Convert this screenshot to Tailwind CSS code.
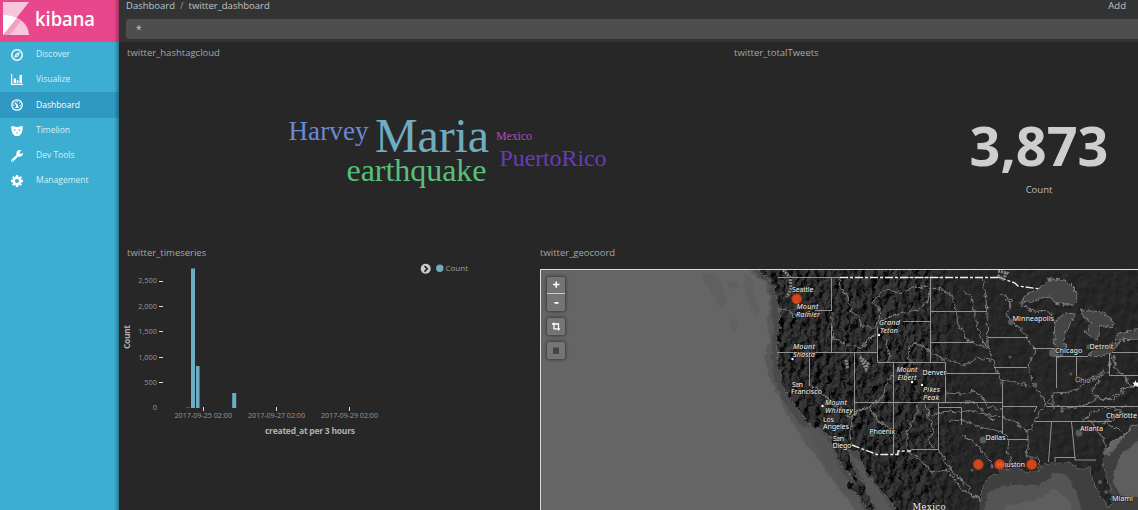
<!DOCTYPE html>
<html lang="en">
<head>
<meta charset="utf-8">
<title>Kibana</title>
<script src="https://cdn.jsdelivr.net/npm/@tailwindcss/browser@4"></script>
</head>
<body class="bg-[#272727] font-['Open_Sans',sans-serif] text-[#a6a6a6]">
<div class="flex h-[510px] w-[1138px] overflow-hidden">
  <aside class="relative w-[119px] shrink-0 bg-[#3caed2]">
    <div class="flex h-[42px] bg-[#e8488b]">
      <svg width="119" height="42" viewBox="0 0 119 42">
        <path d="M3 2H29L3 35Z" fill="#f8c6dc"/>
        <path d="M3 15C17 15 28 22 29 35H3Z" fill="#f8c6dc"/>
        <path d="M3 15C9 15 14 16.500 17 18L3 35Z" fill="#fff"/>
        <path d="M17 18L21 21L10 35H3Z" fill="#f3a0c5"/>
        <text x="35" y="26" fill="#fff" font-family="Open Sans" font-weight="600" font-size="19" textLength="60" lengthAdjust="spacingAndGlyphs">kibana</text>
      </svg>
    </div>
    <nav class="flex flex-col text-[8.5px] text-[#d8eff6]">
      <a class="flex h-[25px] items-center gap-[13px] pl-[11px]"><svg width="12" height="12" viewBox="0 0 12 12"><circle cx="6" cy="6" r="5.200" fill="none" stroke="#fff" stroke-width="1.400"/><path d="M9 3L7.200 7.200L3 9L4.800 4.800Z" fill="#fff"/><circle cx="6" cy="6" r=".8" fill="#3caed2"/></svg><span>Discover</span></a>
      <a class="flex h-[25px] items-center gap-[13px] pl-[11px]"><svg width="12" height="12" viewBox="0 0 12 12"><path d="M0 0H1.200V9.800H12V11H0ZM2.700 4.500H5V9H2.700ZM5.800 6H7.400V9H5.800ZM8.500 1H11V9H8.500Z" fill="#fff"/></svg><span>Visualize</span></a>
      <a class="flex h-[26px] items-center gap-[13px] bg-[#2f99c1] pl-[11px] text-white"><svg width="12" height="12" viewBox="0 0 12 12"><circle cx="6" cy="6" r="5.200" fill="none" stroke="#fff" stroke-width="1.300"/><path d="M3.600 3.500L6.800 6.800" stroke="#fff" stroke-width="1.400"/><path d="M4 9L6 5.800L8 9ZM2.300 5.500H3.500V6.700H2.300ZM5.500 2H6.700V3.200H5.500ZM8 3.500H9V4.600H8ZM8.600 6H9.800V7.200H8.600Z" fill="#fff"/></svg><span>Dashboard</span></a>
      <a class="flex h-[25px] items-center gap-[13px] pl-[11px]"><svg width="12" height="12" viewBox="0 0 12 12"><path d="M0 1.500L3 1L4 2H8L9 1L12 1.500L11.500 5L10.500 8.500L8 11H4L1.500 8.500L.5 5Z" fill="#fff"/><path d="M3 4.500H4.500V5.700H3ZM7.500 4.500H9V5.700H7.500ZM5 7.500H7L6 9Z" fill="#3caed2"/></svg><span>Timelion</span></a>
      <a class="flex h-[25px] items-center gap-[13px] pl-[11px]"><svg width="12" height="12" viewBox="0 0 12 12"><path d="M8.500 0C9.500 0 10.300 .2 10.800 .6L8.700 1.800V3.200L10 4L12 2.800C12.100 5 10.500 6.700 8.500 6.700C7.900 6.700 7.500 6.600 7.100 6.400L2.500 11.200C1.200 12.600-.7 11 .5 9.500L5.500 4.900C5 2.200 6.300 0 8.500 0Z" fill="#fff"/><circle cx="1.700" cy="10.300" r=".6" fill="#3caed2"/></svg><span>Dev Tools</span></a>
      <a class="flex h-[25px] items-center gap-[13px] pl-[11px]"><svg width="12" height="12" viewBox="0 0 12 12"><circle cx="6" cy="6" r="3.300" fill="none" stroke="#fff" stroke-width="2.600"/><path d="M6 0V2M6 10V12M0 6H2M10 6H12M1.800 1.800L3 3M9 9L10.200 10.200M10.200 1.800L9 3M3 9L1.800 10.200" stroke="#fff" stroke-width="2.400"/></svg><span>Management</span></a>
    </nav>
    <div class="absolute inset-y-0 right-0 w-[5px] bg-gradient-to-r from-black/0 to-black/30"></div>
  </aside>

  <main class="flex min-w-0 flex-1 flex-col">
    <header class="h-[42px] bg-[#333333] pl-[7px]">
      <div class="flex h-[19px] justify-between pr-[12px] text-[9.5px] leading-[12px] text-[#c4c4c4]">
        <div class="flex gap-[5px]"><span class="text-[#a5cdd9]">Dashboard</span><span class="text-[#999]">/</span><span>twitter_dashboard</span></div>
        <span>Add</span>
      </div>
      <div class="h-[20px] rounded-l-[3px] bg-[#4e4e4e] pl-[10px] text-[10px] leading-[21px] text-[#ccc]">*</div>
    </header>

    <div class="flex h-[200px]">
      <section class="w-[620px] pl-[8px] pt-[4px]">
        <h2 class="h-[14px] text-[9.5px] leading-[14px]">twitter_hashtagcloud</h2>
        <svg width="600" height="150" viewBox="127 60 600 150" font-family="Liberation Serif">
          <text x="288.500" y="140" font-size="27" fill="#6d87d6" textLength="80">Harvey</text>
          <text x="375" y="152" font-size="48" fill="#6eadc1" textLength="114">Maria</text>
          <text x="346.500" y="181" font-size="32" fill="#57c17b" textLength="140">earthquake</text>
          <text x="496" y="140" font-size="12" fill="#b04bb4" textLength="36">Mexico</text>
          <text x="499.500" y="166" font-size="24" fill="#663db8" textLength="107">PuertoRico</text>
        </svg>
      </section>
      <section class="flex flex-1 flex-col pl-[7px] pt-[4px]">
        <h2 class="h-[14px] text-[9.5px] leading-[14px]">twitter_totalTweets</h2>
        <div class="ml-[205px] mt-[56px] flex w-[200px] flex-col items-center">
          <div class="text-[54px] font-bold leading-[58px] text-[#cecece]">3,873</div>
          <div class="mt-[9px] text-[9.5px] leading-[14px] text-[#bdbdbd]">Count</div>
        </div>
      </section>
    </div>

    <div class="flex h-[268px]">
      <section class="w-[414px] pl-[3px] pt-[4px]">
        <h2 class="h-[14px] pl-[5px] text-[9.5px] leading-[14px]">twitter_timeseries</h2>
        <svg width="400" height="190" viewBox="122 260 400 190" font-family="Open Sans">
          <g fill="#979797" font-size="7.400" text-anchor="end">
            <text x="157" y="283">2,500</text><text x="157" y="309">2,000</text><text x="157" y="334">1,500</text><text x="157" y="360">1,000</text><text x="157" y="385">500</text><text x="157" y="410">0</text>
          </g>
          <path d="M159 281.500H163M159 306.500H163M159 331.500H163M159 357.500H163M159 382.500H163M159 407.500H163M203.500 407V411M276.500 407V411M349.500 407V411" stroke="#ddd"/>
          <path d="M159 407.500H163" stroke="#272727"/>
          <path d="M186 407.500H190" stroke="#4b4b4b"/>
          <g fill="#6eadc1"><path d="M191 268.500H195V408H191ZM196 366H199.500V408H196ZM232.200 393H236.200V408H232.200Z"/></g>
          <g fill="#979797" font-size="7.200"><text x="174.500" y="418" textLength="57.500">2017-09-25 02:00</text><text x="248" y="418" textLength="57">2017-09-27 02:00</text><text x="321" y="418" textLength="57">2017-09-29 02:00</text></g>
          <text x="265" y="434" font-size="8.500" font-weight="700" fill="#b0b0b0" textLength="90">created_at per 3 hours</text>
          <text transform="translate(130 349) rotate(-90)" font-size="8.500" font-weight="700" fill="#b0b0b0" textLength="24">Count</text>
          <circle cx="425.700" cy="268.800" r="5" fill="#ccc"/><path d="M424.500 266L427.300 268.800L424.500 271.600" fill="none" stroke="#272727" stroke-width="1.700"/>
          <circle cx="439.800" cy="268.300" r="3.700" fill="#6eadc1"/><text x="445.500" y="271" font-size="8" fill="#a0a0a0" textLength="22.500">Count</text>
        </svg>
      </section>

      <section class="flex-1 pl-[7px] pt-[4px]">
        <h2 class="h-[14px] text-[9.5px] leading-[14px]">twitter_geocoord</h2>
        <div class="relative mt-[9px] h-[241px] border-l border-t border-[#dddddd]">
          <svg class="block" width="597" height="240" viewBox="541 270 597 240">
            <defs>
              <filter id="relief" x="740" y="265" width="400" height="250" filterUnits="userSpaceOnUse" color-interpolation-filters="sRGB">
                <feTurbulence type="fractalNoise" baseFrequency=".16 .09" numOctaves="4" seed="8"/>
                <feColorMatrix values="0 0 0 0 0 0 0 0 0 0 0 0 0 0 0 1 0 0 0 0"/>
                <feDiffuseLighting surfaceScale="5" lighting-color="#3c3c3c"><feDistantLight azimuth="215" elevation="48"/></feDiffuseLighting>
              </filter>
              <filter id="plain" x="740" y="265" width="400" height="250" filterUnits="userSpaceOnUse" color-interpolation-filters="sRGB">
                <feTurbulence type="fractalNoise" baseFrequency=".12" numOctaves="3" seed="3"/>
                <feColorMatrix values="0 0 0 0 0 0 0 0 0 0 0 0 0 0 0 1 0 0 0 0"/>
                <feDiffuseLighting surfaceScale="1.200" lighting-color="#323232"><feDistantLight azimuth="225" elevation="50"/></feDiffuseLighting>
              </filter>
              <filter id="crinkle" x="541" y="265" width="600" height="250" filterUnits="userSpaceOnUse" color-interpolation-filters="sRGB">
                <feTurbulence type="fractalNoise" baseFrequency=".2" numOctaves="3" seed="5" result="n"/>
                <feDisplacementMap in="SourceGraphic" in2="n" scale="6" xChannelSelector="R" yChannelSelector="G"/>
              </filter>
              <linearGradient id="fade"><stop offset=".45" stop-color="#fff"/><stop offset=".58" stop-color="#000"/></linearGradient>
              <mask id="west" maskUnits="userSpaceOnUse" x="740" y="265" width="400" height="250"><rect x="740" y="265" width="400" height="250" fill="url(#fade)"/></mask>
              <path id="coast" d="M750 262L758 271L766 277L773 284L775 292L777 303L779 310L779 327L777 340L777 352L777 363L781 377L782 385L787 395L795 405L802 415L807 424L818 427L825 432L831 440L835 450L838 462L848 473L855 483L847 482L848 488L860 497L868 514H877L870 498L865 485L857 475L852 463L848 450L858 453L862 465L870 478L883 493L893 505L896 514H980L981 495L983 485L993 475L1005 469L1018 468L1026 472L1034 471L1040 474L1038 468L1045 465L1058 463L1071 464L1081 470L1090 468L1093 482L1098 492L1105 503L1108 508L1112 503L1111 488L1106 475L1103 462L1105 452L1111 443L1123 435L1131 428L1142 422V262Z"/>
              <clipPath id="land"><use href="#coast"/></clipPath>
            </defs>
            <rect x="541" y="270" width="597" height="240" fill="#656565"/>
            <g filter="url(#crinkle)">
              <path d="M701 275L714 272L722 284L726 300L721 309L716 302L710 290ZM726 282L735 280L739 286L731 290ZM731 318L738 323L734 334L729 326ZM745 273L752 280L756 300L760 313L755 318L750 302L744 288Z" fill="#606060"/>
              <path d="M745 268L765 282L770 300L767 320L770 340L765 355L768 375L778 395L785 410L800 435L815 455L832 480L848 500L858 514H910V262H740Z" fill="#585858"/>
              <path d="M751 268L768 283L772 300L773 330L771 350L773 375L783 400L800 424L825 438L834 463L855 490L866 514H900V262H745Z" fill="#4a4a4a"/>
              <path d="M808 425L819 429L831 442L838 466L850 482L860 505L845 495L828 470L818 452Z" fill="#555"/>
              <path d="M965 514V455H1110L1142 415V514Z" fill="#3f3f3f"/>
              <path d="M983 514L988 492L1005 485L1038 485L1050 478L1055 472L1067 475L1075 489L1083 514Z" fill="#545454"/>
              <path d="M1002 514L1006 506L1035 500L1055 488L1070 502L1073 514ZM1142 437L1120 455L1112 480L1118 492L1126 500L1142 494Z" fill="#5e5e5e"/>
              <path d="M848 450L862 465L870 478L896 514H877L865 485Z" fill="#575757"/>
            </g>
            <g filter="url(#crinkle)"><g clip-path="url(#land)">
              <rect x="740" y="265" width="400" height="250" filter="url(#plain)"/>
              <g mask="url(#west)"><rect x="740" y="265" width="400" height="250" filter="url(#relief)"/></g>
              <use href="#coast" fill="none" stroke="#777" stroke-width="1.200"/>
            </g></g>
            <g filter="url(#crinkle)" fill="#454545" stroke="#858585" stroke-width=".9">
              <path d="M1020 303L1028 293L1038 290L1050 279L1065 280L1076 291L1078 303L1065 305L1055 303L1050 296L1041 298L1033 302Z"/>
              <path d="M1065 312L1076 313L1070 323L1064 337L1066 350L1061 356L1055 355L1054 340L1055 323Z"/>
              <path d="M1080 310L1103 312L1115 323L1111 328L1101 325L1098 340L1093 338L1085 332L1091 323L1083 317Z"/>
              <path d="M1088 355L1098 348L1121 342L1111 353L1095 358Z"/><path d="M1115 340L1118 333L1140 329V339Z"/>
            </g>
            <g fill="none" stroke="#7c7c7c" stroke-width="1.100" filter="url(#crinkle)">
              <path d="M839 277L840 287L847 297L852 313L857 315L863 327H877M832 311L833 320L832 330L834 339L847 345L863 347L870 338L877 334"/>
              <path d="M779 309L788 310L795 316L806 312L815 310"/>
              <path d="M877 327L881 311L873 304L876 297L887 289L900 293L913 288L925 287L931 288L943 290L951 295L956 310L958 325L968 340L978 345L988 347L995 367L1001 380L1015 382L1031 387"/>
              <path d="M883 320L898 313L918 310L928 300L931 288M963 292L970 294L974 310L977 327L983 342L988 347"/>
              <path d="M982 277L986 300L987 313L988 347M1005 298L1010 303L1007 315L1012 322L1025 333L1028 340L1035 348L1034 356L1028 363L1031 377L1035 387L1042 396L1046 403L1040 411L1035 420L1028 433L1028 450L1026 457H1038L1039 466"/>
              <path d="M1000 295L1006 296L1012 301L1010 309M1020 304L1033 311L1050 312L1055 323"/>
              <path d="M908 350L913 343L925 347L938 357L965 365L978 358L990 360M886 340L890 356L887 362M908 350L911 366L905 380M887 380L892 375L880 399L870 407L858 411L852 417"/>
              <path d="M810 385L820 392L832 402L845 412L852 420L850 434L851 445M858 411L870 407L878 421L893 430"/>
              <path d="M917 403L917 413L907 433L907 450L917 457L932 473L947 470L963 490L982 500"/>
              <path d="M926 403L928 415L933 430L928 440L935 451M925 403L930 416L945 411L957 413L974 411L988 416L995 420"/>
              <path d="M945 393L960 394L975 391L984 398L988 407L1002 409M960 402H974L986 414L1000 417M950 420L965 421L980 427L1003 432L1008 439L1007 450L1011 460L1006 468M962 434L976 444L988 458L993 468"/>
              <path d="M938 449L951 471L963 481L975 498L981 500M1003 417L1018 424L1028 432"/>
              <path d="M1139 385L1125 388L1115 395L1105 400L1094 396L1093 388L1100 381L1094 376M1048 403L1053 393L1070 392L1084 384L1094 376L1108 373L1110 362L1113 354M1053 410L1053 393M1048 403L1065 409L1085 405L1099 398L1113 400L1125 391M1082 421L1092 412L1105 407L1120 410M1088 421L1100 422L1120 430L1124 435M1091 421L1105 442L1105 450M1112 421L1122 412L1131 417M1105 421L1118 414L1126 405M1113 354L1116 370L1125 377L1132 388"/>
              <path d="M1105 452L1111 443L1123 435L1131 428L1142 422"/>
            </g>
            <g fill="none" stroke="#929292">
              <path d="M778 277.500H842M900 277.500H940M831.500 278V311M815 310.500H831M831.500 326V352.500M777 352.500H877.500V327M809.500 353V386M854.500 353V415M877.500 352V362.500H945.500V402.500M930.500 278V362M903 321.500H930M893.500 363V454M855 402.500H1002M1002.500 380V434M930 311.500H987M930 342.500H973M945 373.500H1000M938.500 403V449.500H911M938 407.500H961.500V425M988 337.500H1028M994 367.500H1027M1003 406.500H1037L1034 412M1046 406.500H1138M1035 421.500H1112M1007 439.500H1028M1051.500 422L1048.500 462M1071.500 422L1075 458M1055 462V457.500H1075V460H1096M1033 348.500H1055M1056.500 356V388M1056 356.500H1088M1076.500 356V378M1109.500 353V375.500H1138M1112 352.500H1138"/>
            </g>
            <path d="M840 277.500H998M852 445L877 454.500H898V451H911M998 277L1015 283L1018 286L1040 289" fill="none" stroke="#eee" stroke-width="1.400" stroke-dasharray="8 2 3 2"/>
            <path d="M783 270L790 277L791 288L787 297M998 271L1007 273L1003 279L997 275M860 357L868 364L866 369ZM846 360L848 369" fill="none" stroke="#868686" stroke-width="3" stroke-dasharray="2 1"/>
            <g fill="#5a5a5a"><circle cx="1011" cy="322" r="3"/><circle cx="1053" cy="353" r="4"/><circle cx="1089" cy="347" r="2.500"/><circle cx="983" cy="440" r="3.500"/><circle cx="1079" cy="433" r="3.500"/><circle cx="1035" cy="385" r="2.500"/><circle cx="1002" cy="383" r="2"/><circle cx="972" cy="470" r="1.500"/><circle cx="1071" cy="374" r="1.500"/><circle cx="1062" cy="411" r="2"/><circle cx="1100" cy="482" r="2"/><circle cx="1010" cy="357" r="1.500"/><circle cx="872" cy="434" r="3"/><circle cx="1106" cy="492" r="1.800"/></g>
            <g fill="#fff"><circle cx="792.500" cy="359" r="1.200"/><circle cx="879" cy="335" r="1.200"/><circle cx="822.500" cy="406" r="1.200"/><circle cx="912" cy="382" r="1.200"/><circle cx="922" cy="385" r="1.200"/><path d="M1135.500 380L1136.300 382.500H1138V387L1135.500 385.500L1133.500 387L1134.200 384.500L1132.500 382.500H1134.700Z"/></g>
            <g fill="#f2f2f2" font-family="Noto Sans, sans-serif" font-size="7.300" stroke="#222" stroke-width="1.200" paint-order="stroke" lengthAdjust="spacingAndGlyphs">
              <text x="792" y="292" textLength="21.500">Seattle</text>
              <g font-style="italic"><text x="796.500" y="309" textLength="22">Mount</text><text x="796" y="317" textLength="24">Rainier</text><text x="793" y="348.500" textLength="22">Mount</text><text x="793" y="356.500" textLength="22">Shasta</text><text x="879" y="324.500" textLength="21">Grand</text><text x="880" y="332.500" textLength="18">Teton</text><text x="896.500" y="372" textLength="21">Mount</text><text x="897.500" y="380" textLength="19">Elbert</text><text x="923" y="392" textLength="17">Pikes</text><text x="923" y="400" textLength="16">Peak</text><text x="825" y="404.500" textLength="22">Mount</text><text x="825" y="412.500" textLength="28">Whitney</text></g>
              <text x="792" y="387" textLength="11">San</text><text x="791" y="394" textLength="31">Francisco</text>
              <text x="823" y="422" textLength="11">Los</text><text x="823" y="429" textLength="26">Angeles</text>
              <text x="833" y="441" textLength="11">San</text><text x="832.500" y="448" textLength="19">Diego</text>
              <text x="869.500" y="434" textLength="25.500">Phoenix</text><text x="922.500" y="374.500" textLength="24">Denver</text>
              <text x="1012.500" y="320.500" textLength="41.500">Minneapolis</text><text x="1055" y="353" textLength="27.500">Chicago</text><text x="1089.500" y="348.500" textLength="24">Detroit</text>
              <text x="985.500" y="439.500" textLength="20">Dallas</text><text x="997" y="467" textLength="28">Houston</text><text x="1080" y="431" textLength="23">Atlanta</text><text x="1106" y="418" textLength="31">Charlotte</text><text x="1112" y="501" textLength="21">Miami</text>
              <path id="ohio" d="M1074.500 381C1090 387 1099 380 1108 370" fill="none" stroke="none"/>
              <text fill="#aaa"><textPath href="#ohio">Ohio River</textPath></text>
              <text x="912.500" y="510" font-family="DejaVu Serif" font-size="8.500" textLength="33">Mexico</text>
            </g>
            <g fill="#f4501f" fill-opacity=".82" stroke="#b93412" stroke-width="1.100"><circle cx="796.800" cy="299" r="4.900"/><circle cx="978.300" cy="464.500" r="4.900"/><circle cx="999.700" cy="464.500" r="4.900"/><circle cx="1031.700" cy="464.500" r="4.900"/></g>
          </svg>
          <div class="absolute left-[6px] top-[7px] flex w-[18px] flex-col gap-[7px] text-center text-white">
            <div class="h-[34px] overflow-hidden rounded-[2px] bg-[#747474] shadow-[0_0_3px_1px_rgba(0,0,0,0.4)]">
              <svg width="18" height="34" viewBox="0 0 18 34"><path d="M6 7.500H12.500M9.250 4.500V10.800" stroke="#fff" stroke-width="1.500"/><path d="M0 16.500H18" stroke="#ccc"/><path d="M7.500 25.800H11.500" stroke="#fff" stroke-width="1.700"/></svg>
            </div>
            <div class="h-[17px] rounded-[2px] bg-[#747474] shadow-[0_0_3px_1px_rgba(0,0,0,0.4)]"><svg width="18" height="17" viewBox="0 0 18 17"><path d="M7 4.500V10.800H13M5 6H11.500V12.500" fill="none" stroke="#fff" stroke-width="1.300"/></svg></div>
            <div class="h-[17px] rounded-[2px] bg-[#747474] shadow-[0_0_3px_1px_rgba(0,0,0,0.4)]"><svg width="18" height="17" viewBox="0 0 18 17"><path d="M6 5.500H12V12H6Z" fill="#444"/></svg></div>
          </div>
        </div>
      </section>
    </div>
  </main>
</div>
</body>
</html>
